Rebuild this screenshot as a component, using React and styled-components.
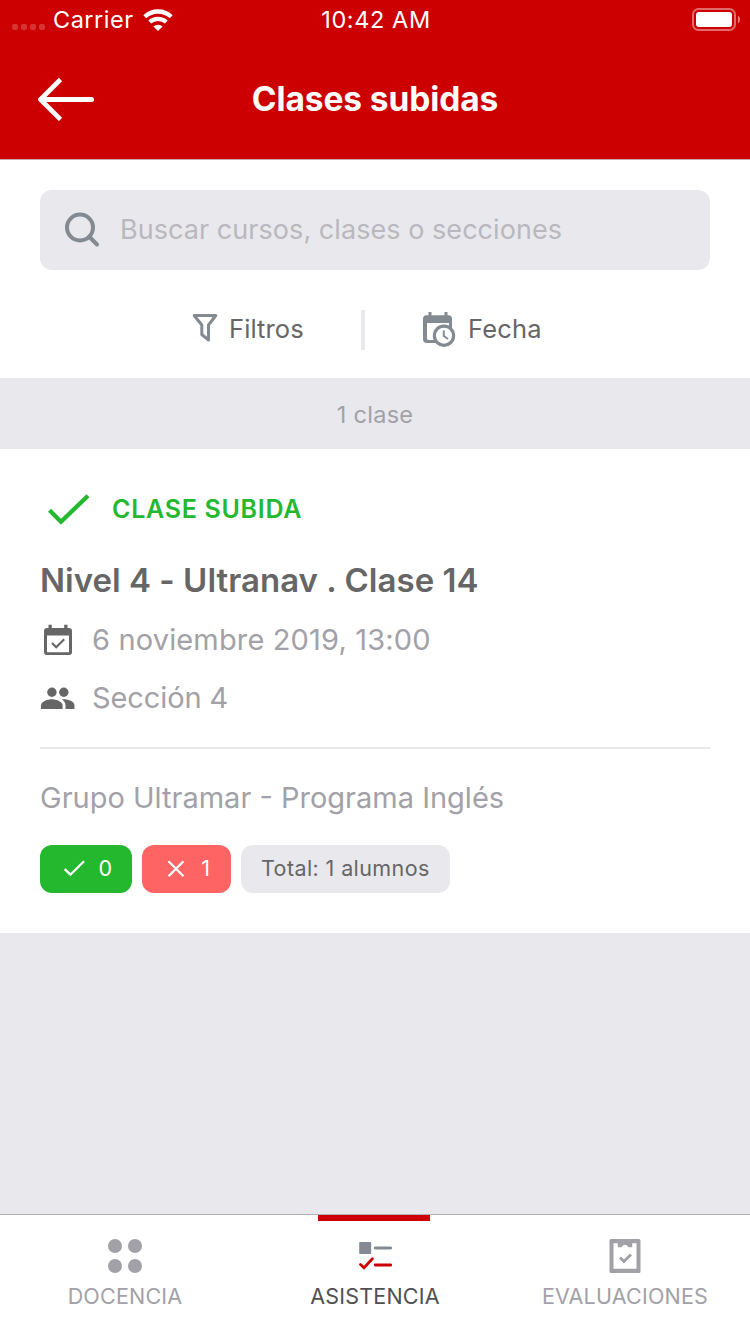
import React from "react";
import styled, { createGlobalStyle } from "styled-components";

const color = {
  red: "#cc0000",
  green: "#24b82f",
  coral: "#ff6464",
  surface: "#e9e8ed",
  slate: "#838a92",
  text: "#666666",
  muted: "#a2a1a8",
};

const GlobalStyle = createGlobalStyle`
  * { box-sizing: border-box; }
  body {
    margin: 0;
    background: ${color.surface};
    font-family: Inter, "Liberation Sans", sans-serif;
  }
  svg { display: block; flex: none; }
`;

const Screen = styled.div`
  display: flex;
  flex-direction: column;
  width: 750px;
  height: 1334px;
  overflow: hidden;
  background: ${color.surface};
`;

const Text = styled.span`
  font-size: ${(p) => p.$size}px;
  font-weight: ${(p) => p.$weight || 400};
  letter-spacing: ${(p) => p.$track || 0}px;
  line-height: 40px;
  color: ${(p) => p.$color || color.text};
  white-space: nowrap;
`;

const Header = styled.header`
  height: 160px;
  flex: none;
  background: ${color.red};
  border-bottom: 1px solid #c4a5a5;
`;

const StatusBar = styled.div`
  display: grid;
  grid-template-columns: 1fr auto 1fr;
  align-items: center;
  height: 40px;
  padding: 0 10px 0 12px;
`;

const Carrier = styled.div`
  display: flex;
  align-items: center;
`;

const SignalDots = styled.div`
  display: flex;
  gap: 3px;
  margin: 14px 8px 0 0;
`;

const SignalDot = styled.i`
  width: 6px;
  height: 6px;
  border-radius: 2px;
  background: rgba(255, 255, 255, 0.2);
`;

const BatterySlot = styled.div`
  display: flex;
  justify-content: flex-end;
  padding-bottom: 1px;
`;

const NavBar = styled.div`
  display: grid;
  grid-template-columns: 60px 1fr 60px;
  align-items: center;
  height: 118px;
  padding: 0 36px;
  text-align: center;
`;

const SearchPanel = styled.section`
  height: 218px;
  flex: none;
  padding: 30px 40px 0;
  background: #fff;
`;

const SearchField = styled.div`
  display: flex;
  align-items: center;
  gap: 20px;
  height: 80px;
  padding: 0 0 1px 24px;
  border-radius: 12px;
  background: ${color.surface};
`;

const FilterRow = styled.div`
  display: flex;
  align-items: center;
  height: 40px;
  margin-top: 40px;
  padding-left: 152px;
`;

const FilterButton = styled.div`
  display: flex;
  align-items: center;
  gap: ${(p) => p.$gap}px;
  width: ${(p) => p.$width}px;
  padding-bottom: 2px;
`;

const Divider = styled.div`
  width: 4px;
  height: 40px;
  margin-right: 58px;
  background: ${color.surface};
`;

const CountBar = styled.div`
  display: flex;
  align-items: center;
  justify-content: center;
  height: 71px;
  flex: none;
  padding-top: 2px;
`;

const Card = styled.article`
  height: 484px;
  flex: none;
  padding: 40px;
  background: #fff;
`;

const CardRow = styled.div`
  display: flex;
  align-items: center;
  height: 40px;
  margin-top: ${(p) => p.$top || 0}px;
`;

const IconSlot = styled.div`
  width: ${(p) => p.$width}px;
  flex: none;
`;

const Rule = styled.hr`
  height: 2px;
  margin: 29px 0;
  border: 0;
  background: ${color.surface};
`;

const Badges = styled.div`
  display: flex;
  gap: 10px;
  margin-top: 27px;
`;

const Badge = styled.div`
  display: flex;
  align-items: center;
  justify-content: space-between;
  width: ${(p) => p.$width}px;
  height: 48px;
  padding: 0 20px 2px;
  border-radius: 12px;
  background: ${(p) => p.$fill};
`;

const TabBar = styled.nav`
  display: grid;
  grid-template-columns: repeat(3, 1fr);
  height: 120px;
  flex: none;
  margin-top: auto;
  border-top: 1px solid #b2b2b2;
  background: #fff;
`;

const Tab = styled.div`
  display: flex;
  flex-direction: column;
  align-items: center;
`;

const TabMarker = styled.div`
  width: 112px;
  height: 6px;
  margin: 0 2px 0 0;
  background: ${(p) => (p.$active ? color.red : "transparent")};
`;

const TabIcon = styled.div`
  height: 38px;
  margin: 16px 0 1px;
`;

const WifiIcon = () => (
  <svg width="30" height="22" viewBox="0 0 30 22" fill="none" stroke="#fff">
    <path d="M1.800 7.700a19.300 19.300 0 0 1 26.400 0" strokeWidth="4.300" />
    <path d="M6.700 13a12.400 12.400 0 0 1 16.600 0" strokeWidth="4.200" />
    <path d="M10.400 17.600a6.600 6.600 0 0 1 9.200 0L15 22z" fill="#fff" stroke="none" />
  </svg>
);

const BatteryIcon = () => (
  <svg width="48" height="23" viewBox="0 0 48 23">
    <rect x="1" y="1" width="42" height="21" rx="5.500" fill="none" stroke="#fff" strokeOpacity=".42" strokeWidth="2" />
    <rect x="4" y="4" width="36" height="15" rx="3" fill="#fff" />
    <path d="M46 7.500c2.600 1.500 2.600 6.500 0 8z" fill="#fff" fillOpacity=".5" />
  </svg>
);

const BackIcon = () => (
  <svg width="60" height="44" viewBox="0 0 60 44" fill="none" stroke="#fff" strokeWidth="5">
    <path d="M5 22.500h50.500" strokeLinecap="round" />
    <path d="M24.500 2.500L4.500 22.500l20 20" strokeWidth="4.600" strokeLinejoin="round" />
  </svg>
);

const SearchIcon = () => (
  <svg width="36" height="36" viewBox="0 0 36 36" fill="none" stroke={color.slate} strokeWidth="4">
    <circle cx="16" cy="15.500" r="13" />
    <path d="M25.500 25l7.500 7.500" strokeLinecap="round" />
  </svg>
);

const FunnelIcon = () => (
  <svg width="26" height="32" viewBox="0 0 26 32" fill="none" stroke={color.slate} strokeWidth="3" strokeLinejoin="round">
    <path d="M2.200 2.500h21.600l-7.300 9.500v15l-6.700-5.500V12z" />
  </svg>
);

const CalendarClockIcon = () => (
  <svg width="34" height="36" viewBox="0 0 34 36">
    <path d="M5.500 1h3v3.200h13V1h3v3.200h1q3.500 0 3.500 3.500V14H4v13.500q0 1.500 1.500 1.500H13v3H4q-4 0-4-4V7.700q0-3.500 3.500-3.500h2z" fill={color.slate} />
    <path d="M4 12h22v6H4z" fill="#fff" />
    <path d="M26 12h3v5h-3z" fill={color.slate} />
    <circle cx="21" cy="24.700" r="11.200" fill={color.slate} />
    <circle cx="21" cy="24.700" r="8" fill="#fff" />
    <path d="M20.800 19.500v5.500l4.300 3" fill="none" stroke={color.slate} strokeWidth="2" />
  </svg>
);

const CheckIcon = () => (
  <svg width="42" height="32" viewBox="0 0 42 32" fill="none" stroke={color.green} strokeWidth="4.300">
    <path d="M1.500 17.200L13 28.700 40 2.700" />
  </svg>
);

const CalendarCheckIcon = () => (
  <svg width="28" height="32" viewBox="0 0 28 32" fill="none">
    <path fillRule="evenodd" fill={color.text} d="M4.500 .7h3.300v3.200h12.400V.7h3.300v3.200H25q3 0 3 3V28q0 3-3 3H3q-3 0-3-3V6.900q0-3 3-3h1.500zM3 11.500v16.800h22V11.500z" />
    <path d="M8 19l4.200 4.200 8-8" stroke={color.text} strokeWidth="2.200" />
  </svg>
);

const PeopleIcon = () => (
  <svg width="34" height="22" viewBox="0 0 34 22" fill={color.text}>
    <circle cx="10.900" cy="5.300" r="4.700" />
    <circle cx="22.800" cy="5.300" r="4.700" />
    <path d="M0 22V18.500c0-4.200 7-6.200 10.800-6.200S21.600 14.300 21.600 18.500V22z" />
    <path d="M20.900 12.500c4.800-.7 12.600 1.500 12.600 6V22h-9V18.500c0-2.700-1.500-4.700-3.600-6z" />
  </svg>
);

const BadgeCheck = () => (
  <svg width="28" height="24" viewBox="0 0 28 24" fill="none" stroke="#fff" strokeWidth="2.300">
    <path d="M4.700 13.200l5.700 5.500L24 5.200" />
  </svg>
);

const BadgeCross = () => (
  <svg width="28" height="24" viewBox="0 0 28 24" fill="none" stroke="#fff" strokeWidth="2.300">
    <path d="M6.500 5.200l15 15M21.500 5.200l-15 15" />
  </svg>
);

const DotsIcon = () => (
  <svg width="34" height="38" viewBox="0 0 34 38" fill={color.muted}>
    <circle cx="7" cy="9" r="7" />
    <circle cx="27" cy="9" r="7" />
    <circle cx="7" cy="29" r="7" />
    <circle cx="27" cy="29" r="7" />
  </svg>
);

const ChecklistIcon = () => (
  <svg width="34" height="38" viewBox="0 0 34 38" fill="none" strokeLinecap="round">
    <rect x="1.200" y="5" width="12" height="12" rx="1" fill={color.slate} />
    <path d="M17.200 11h15.500" stroke={color.slate} strokeWidth="2.800" />
    <path d="M17.200 28h15.500" stroke={color.red} strokeWidth="2.800" />
    <path d="M2.500 27.500l3.500 3.200 8.400-9" stroke={color.red} strokeWidth="2.800" />
  </svg>
);

const ClipboardIcon = () => (
  <svg width="32" height="38" viewBox="0 0 32 38" fill="none">
    <path fillRule="evenodd" fill={color.muted} d="M2 2h28q1.500 0 1.500 1.500v31q0 1.500-1.500 1.500H2q-1.500 0-1.500-1.500v-31Q.5 2 2 2zM4.500 6.200v25.600h23V6.200h-4.300v4h-3.600q-3.600-4.700-7.200 0H8.800v-4z" />
    <path d="M11 20.500l4 4 7-7" stroke={color.muted} strokeWidth="3" />
  </svg>
);

const tabs = [
  { name: "DOCENCIA", Icon: DotsIcon },
  { name: "ASISTENCIA", Icon: ChecklistIcon, active: true },
  { name: "EVALUACIONES", Icon: ClipboardIcon },
];

export default function App() {
  return (
    <Screen>
      <GlobalStyle />
      <Header>
        <StatusBar>
          <Carrier>
            <SignalDots>
              {[0, 1, 2, 3].map((n) => <SignalDot key={n} />)}
            </SignalDots>
            <Text $size={23.5} $track={0.5} $color="#fff">Carrier</Text>
            <IconSlot $width={9} />
            <WifiIcon />
          </Carrier>
          <Text $size={23.5} $track={0.6} $color="#fff">10:42 AM</Text>
          <BatterySlot><BatteryIcon /></BatterySlot>
        </StatusBar>
        <NavBar>
          <BackIcon />
          <Text $size={33.5} $weight={700} $track={-0.1} $color="#fff">Clases subidas</Text>
        </NavBar>
      </Header>

      <SearchPanel>
        <SearchField>
          <SearchIcon />
          <Text $size={27} $track={0.05} $color="#b9b8be">Buscar cursos, clases o secciones</Text>
        </SearchField>
        <FilterRow>
          <FilterButton $width={169} $gap={11}>
            <FunnelIcon />
            <Text $size={25.5} $track={0.1}>Filtros</Text>
          </FilterButton>
          <Divider />
          <FilterButton $width={125} $gap={11}>
            <CalendarClockIcon />
            <Text $size={25.5} $track={0.15}>Fecha</Text>
          </FilterButton>
        </FilterRow>
      </SearchPanel>

      <CountBar>
        <Text $size={23.5} $track={0.3} $color={color.muted}>1 clase</Text>
      </CountBar>

      <Card>
        <CardRow>
          <IconSlot $width={8} />
          <IconSlot $width={64}><CheckIcon /></IconSlot>
          <Text $size={25} $weight={600} $track={0.72} $color={color.green}>CLASE SUBIDA</Text>
        </CardRow>
        <CardRow $top={31}>
          <Text $size={33} $weight={600} $track={0.02}>Nivel 4 - Ultranav . Clase 14</Text>
        </CardRow>
        <CardRow $top={20}>
          <IconSlot $width={4} />
          <IconSlot $width={48}><CalendarCheckIcon /></IconSlot>
          <Text $size={29} $track={0.15} $color={color.muted}>6 noviembre 2019, 13:00</Text>
        </CardRow>
        <CardRow $top={18}>
          <IconSlot $width={1} />
          <IconSlot $width={51}><PeopleIcon /></IconSlot>
          <Text $size={29} $track={-0.1} $color={color.muted}>Sección 4</Text>
        </CardRow>
        <Rule />
        <CardRow>
          <Text $size={29} $color={color.muted}>Grupo Ultramar - Programa Inglés</Text>
        </CardRow>
        <Badges>
          <Badge $width={92} $fill={color.green}>
            <BadgeCheck />
            <Text $size={21.5} $color="#fff">0</Text>
          </Badge>
          <Badge $width={89} $fill={color.coral}>
            <BadgeCross />
            <Text $size={21.5} $track={1} $color="#fff">1</Text>
          </Badge>
          <Badge $width={209} $fill={color.surface}>
            <Text $size={21.5} $track={0.4}>Total: 1 alumnos</Text>
          </Badge>
        </Badges>
      </Card>

      <TabBar>
        {tabs.map(({ name, Icon, active }) => (
          <Tab key={name}>
            <TabMarker $active={active} />
            <TabIcon><Icon /></TabIcon>
            <Text $size={21.5} $track={0.2} $color={active ? "#505050" : color.muted}>{name}</Text>
          </Tab>
        ))}
      </TabBar>
    </Screen>
  );
}
